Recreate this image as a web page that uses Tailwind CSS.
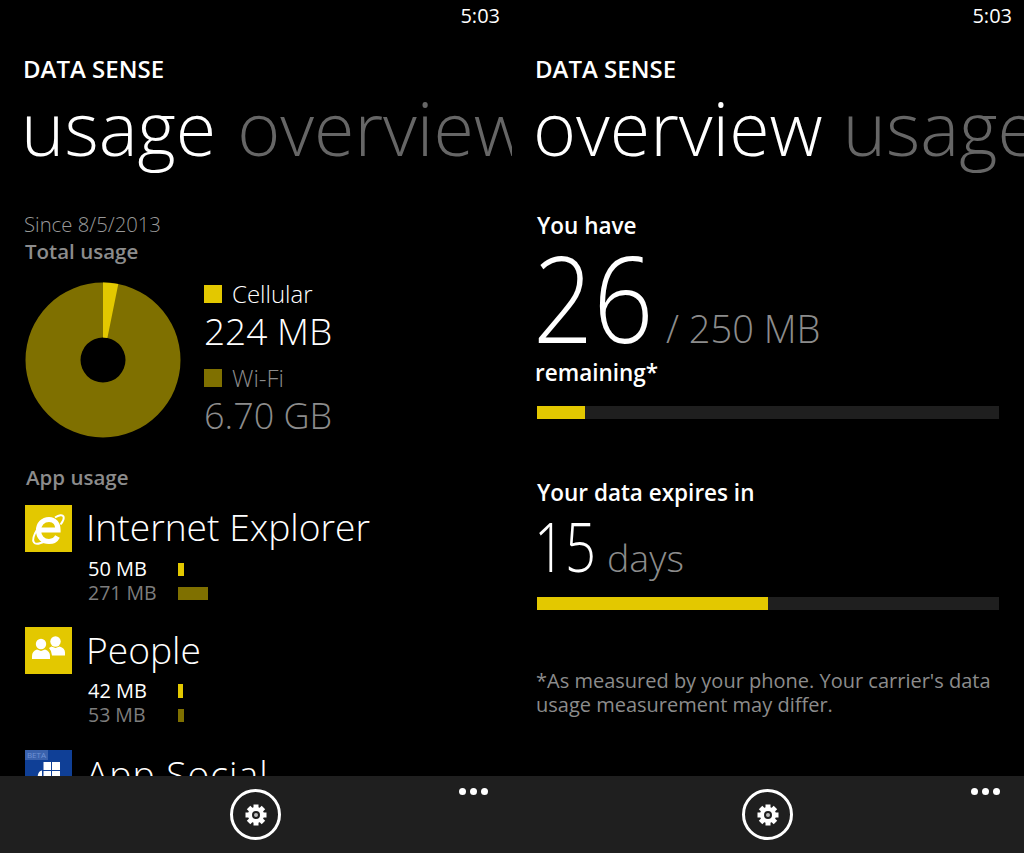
<!DOCTYPE html>
<html lang="en">
<head>
  <meta charset="UTF-8" />
  <title>Data Sense</title>
  <script src="https://cdn.jsdelivr.net/npm/@tailwindcss/browser@4"></script>
</head>
<body class="bg-black text-white font-['Open_Sans',sans-serif]">
  <div class="grid grid-cols-2 w-[1024px] h-[853px] overflow-hidden">

    <!-- Usage panel -->
    <section class="flex flex-col h-[853px] overflow-hidden">
      <div class="flex-1 overflow-hidden">
        <div class="h-[32px] pr-[12px] text-right text-[20px] leading-[32px]">5:03</div>
        <div class="mt-[20px] pl-[23px] text-[24px] leading-[34px] font-semibold whitespace-nowrap">DATA SENSE</div>
        <div class="flex gap-[21px] -mt-[3px] pl-[21px] h-[90px] w-[512px] overflow-hidden text-[73.5px] leading-[90px] font-light whitespace-nowrap">
          <span>usage</span>
          <span class="text-[#666666]">overview</span>
        </div>

        <div class="mt-[37px] pl-[24px] text-[20.300px] leading-[28px] font-[350] text-[#999999]">Since 8/5/2013</div>
        <div class="-mt-[1px] pl-[25px] text-[20.500px] leading-[28px] font-semibold text-[#8c8c8c]">Total usage</div>

        <!-- Pie and legend -->
        <div class="flex mt-[17px] pl-[25px]">
          <svg class="shrink-0" width="156" height="156" viewBox="-78 -78 156 156">
            <path fill="#7f7000" fill-rule="evenodd" d="M0-77.500A77.500 77.500 0 1 1 0 77.500A77.500 77.500 0 1 1 0-77.500ZM0-22.500A22.500 22.500 0 1 0 0 22.500A22.500 22.500 0 1 0 0-22.500Z" />
            <path fill="#e3c800" d="M0-77.500A77.500 77.500 0 0 1 15.300-76L4.400-22.100A22.500 22.500 0 0 0 0-22.500Z" />
          </svg>
          <div class="ml-[23px]">
            <div class="flex items-center h-[24px]">
              <span class="w-[18px] h-[18px] bg-[#e3c800]"></span>
              <span class="ml-[10px] text-[24px] leading-[24px] font-[350]">Cellular</span>
            </div>
            <div class="mt-[3px] text-[37px] leading-[44px] font-[350] whitespace-nowrap">224 MB</div>
            <div class="flex items-center h-[24px] mt-[13px]">
              <span class="w-[18px] h-[18px] bg-[#7f7000]"></span>
              <span class="ml-[10px] text-[24px] leading-[24px] font-[350] text-[#8c8c8c]">Wi-Fi</span>
            </div>
            <div class="mt-[4px] text-[36px] leading-[44px] font-[350] text-[#8c8c8c] whitespace-nowrap">6.70 GB</div>
          </div>
        </div>

        <div class="mt-[25px] pl-[26px] text-[20.500px] leading-[28px] font-semibold text-[#8c8c8c]">App usage</div>

        <!-- App rows -->
        <div class="flex flex-col gap-[27px] mt-[14px] pl-[25px]">
          <div class="h-[95px]">
            <div class="flex items-center h-[47px]">
              <svg class="shrink-0" width="47" height="47" viewBox="0 0 47 47">
                <rect width="47" height="47" fill="#e3c800" />
                <path fill="none" stroke="#fff" stroke-width="5.200" d="M14 25h19c0-6-3.500-10.500-9-10.500c-6 0-10.500 4.500-10.500 11s4.500 11 10.500 11c4 0 7-2 8.500-5" />
                <path fill="none" stroke="#fff" stroke-width="2" d="M30 12.500c4-2.500 7.500-3 8.500-1c1 2.500-1 5.500-3 8M12.500 24c-3.500 5.500-5.500 11-3.500 13.500c1.500 2 6.500 1 11.500-1.500" />
              </svg>
              <span class="ml-[14px] pb-[4px] text-[37.200px] leading-[47px] font-[350] whitespace-nowrap">Internet Explorer</span>
            </div>
            <div class="flex items-center h-[24px] mt-[5px]">
              <span class="ml-[63px] w-[90px] text-[20px] leading-[24px]">50 MB</span>
              <span class="w-[6px] h-[13px] bg-[#e3c800]"></span>
            </div>
            <div class="flex items-center h-[24px]">
              <span class="ml-[63px] w-[90px] text-[19.500px] leading-[24px] text-[#7d7d7d]">271 MB</span>
              <span class="w-[30px] h-[13px] bg-[#7f7000]"></span>
            </div>
          </div>

          <div class="h-[96px]">
            <div class="flex items-center h-[47px]">
              <svg class="shrink-0" width="47" height="47" viewBox="0 0 47 47">
                <rect width="47" height="47" fill="#e3c800" />
                <circle cx="16" cy="17" r="5.200" fill="#fff" />
                <circle cx="30.500" cy="14.500" r="5.200" fill="#fff" />
                <path fill="#fff" d="M7 32v-3q0-5 5-6.500l4 1.500l4-1.500q5 1.500 5 6.500v3Z" />
                <path fill="#fff" d="M24 21l2.500-1.500l4 1.500l4-1.500q5.500 1.500 5.500 6v3H27q-.5-5-3-7.500Z" />
              </svg>
              <span class="ml-[14px] pb-[2px] text-[37.200px] leading-[47px] font-[350] whitespace-nowrap">People</span>
            </div>
            <div class="flex items-center h-[24px] mt-[5px]">
              <span class="ml-[63px] w-[90px] text-[20px] leading-[24px]">42 MB</span>
              <span class="w-[5px] h-[14px] bg-[#e3c800]"></span>
            </div>
            <div class="flex items-center h-[24px]">
              <span class="ml-[63px] w-[90px] text-[19.500px] leading-[24px] text-[#7d7d7d]">53 MB</span>
              <span class="w-[6px] h-[13px] bg-[#7f7000]"></span>
            </div>
          </div>

          <div class="flex items-center h-[47px]">
            <div class="relative shrink-0 w-[47px] h-[47px] bg-[#0f3f96]">
              <span class="absolute left-0 top-0 w-[23px] h-[10px] bg-[#3a62ad] text-[#6f92d4] text-[8px] leading-[10px] text-center">BETA</span>
              <svg class="absolute left-0 top-0" width="47" height="47" viewBox="0 0 47 47">
                <path fill="#fff" d="M18.500 12H26v8h-7.500ZM27 12h8v8h-8ZM18.500 21H26v8h-7.500ZM27 21h8v8h-8ZM12.500 29q0-8 4.500-8.500V29Z" />
              </svg>
            </div>
            <span class="ml-[14px] text-[37.200px] tracking-[1px] leading-[47px] font-[350] whitespace-nowrap">App Social</span>
          </div>
        </div>
      </div>

      <div class="flex shrink-0 h-[77px] pl-[230px] pt-[13px] bg-[#1f1f1f]">
        <div class="flex items-center justify-center w-[51px] h-[51px] rounded-full border-[3px] border-white">
          <svg width="24" height="24" viewBox="-12 -12 24 24">
            <g fill="#fff">
              <rect x="-2.500" y="-10.500" width="5" height="21" />
              <rect x="-2.500" y="-10.500" width="5" height="21" transform="rotate(45)" />
              <rect x="-2.500" y="-10.500" width="5" height="21" transform="rotate(90)" />
              <rect x="-2.500" y="-10.500" width="5" height="21" transform="rotate(135)" />
              <circle r="8" />
            </g>
            <circle r="3" fill="#bbbbbb" stroke="#1f1f1f" stroke-width="2" />
          </svg>
        </div>
        <div class="flex gap-[4px] ml-[178px] mt-[-1px] h-[7px]">
          <span class="w-[7px] h-[7px] rounded-full bg-white"></span>
          <span class="w-[7px] h-[7px] rounded-full bg-white"></span>
          <span class="w-[7px] h-[7px] rounded-full bg-white"></span>
        </div>
      </div>
    </section>

    <!-- Overview panel -->
    <section class="flex flex-col h-[853px] overflow-hidden">
      <div class="flex-1 overflow-hidden">
        <div class="h-[32px] pr-[12px] text-right text-[20px] leading-[32px]">5:03</div>
        <div class="mt-[20px] pl-[23px] text-[24px] leading-[34px] font-semibold whitespace-nowrap">DATA SENSE</div>
        <div class="flex gap-[20px] -mt-[3px] pl-[21px] h-[90px] w-[512px] overflow-hidden text-[73.5px] leading-[90px] font-light whitespace-nowrap">
          <span>overview</span>
          <span class="text-[#666666]">usage</span>
        </div>

        <div class="mt-[39px] pl-[25px] text-[22.500px] leading-[28px] font-semibold">You have</div>
        <div class="flex items-baseline h-[116px] -mt-[1px] pl-[21px] whitespace-nowrap">
          <span class="inline-block w-[133px] origin-left scale-x-[0.88] text-[120px] leading-[116px] font-light">26</span>
          <span class="text-[38px] leading-[44px] font-[350] text-[#8c8c8c]">/ 250 MB</span>
        </div>
        <div class="mt-[4px] pl-[23px] text-[22.500px] leading-[28px] font-semibold">remaining*</div>
        <div class="flex mt-[19px] ml-[25px] w-[462px] h-[13px] bg-[#1f1f1f]">
          <div class="w-[48px] bg-[#e3c800]"></div>
        </div>

        <div class="mt-[60px] pl-[25px] text-[22.500px] leading-[28px] font-semibold whitespace-nowrap">Your data expires in</div>
        <div class="flex items-baseline h-[70px] mt-[4px] pl-[22px] whitespace-nowrap">
          <span class="inline-block w-[73px] origin-left scale-x-[0.8] text-[68px] leading-[70px] font-light">15</span>
          <span class="text-[37.500px] leading-[44px] font-[350] text-[#8c8c8c]">days</span>
        </div>
        <div class="flex mt-[16px] ml-[25px] w-[462px] h-[13px] bg-[#1f1f1f]">
          <div class="w-[231px] bg-[#e3c800]"></div>
        </div>

        <div class="mt-[59px] pl-[24px] w-[500px] text-[20px] leading-[24px] text-[#8c8c8c]">
          *As measured by your phone. Your carrier's data usage measurement may differ.
        </div>
      </div>

      <div class="flex shrink-0 h-[77px] pl-[230px] pt-[13px] bg-[#1f1f1f]">
        <div class="flex items-center justify-center w-[51px] h-[51px] rounded-full border-[3px] border-white">
          <svg width="24" height="24" viewBox="-12 -12 24 24">
            <g fill="#fff">
              <rect x="-2.500" y="-10.500" width="5" height="21" />
              <rect x="-2.500" y="-10.500" width="5" height="21" transform="rotate(45)" />
              <rect x="-2.500" y="-10.500" width="5" height="21" transform="rotate(90)" />
              <rect x="-2.500" y="-10.500" width="5" height="21" transform="rotate(135)" />
              <circle r="8" />
            </g>
            <circle r="3" fill="#bbbbbb" stroke="#1f1f1f" stroke-width="2" />
          </svg>
        </div>
        <div class="flex gap-[4px] ml-[178px] mt-[-1px] h-[7px]">
          <span class="w-[7px] h-[7px] rounded-full bg-white"></span>
          <span class="w-[7px] h-[7px] rounded-full bg-white"></span>
          <span class="w-[7px] h-[7px] rounded-full bg-white"></span>
        </div>
      </div>
    </section>
  </div>
</body>
</html>
